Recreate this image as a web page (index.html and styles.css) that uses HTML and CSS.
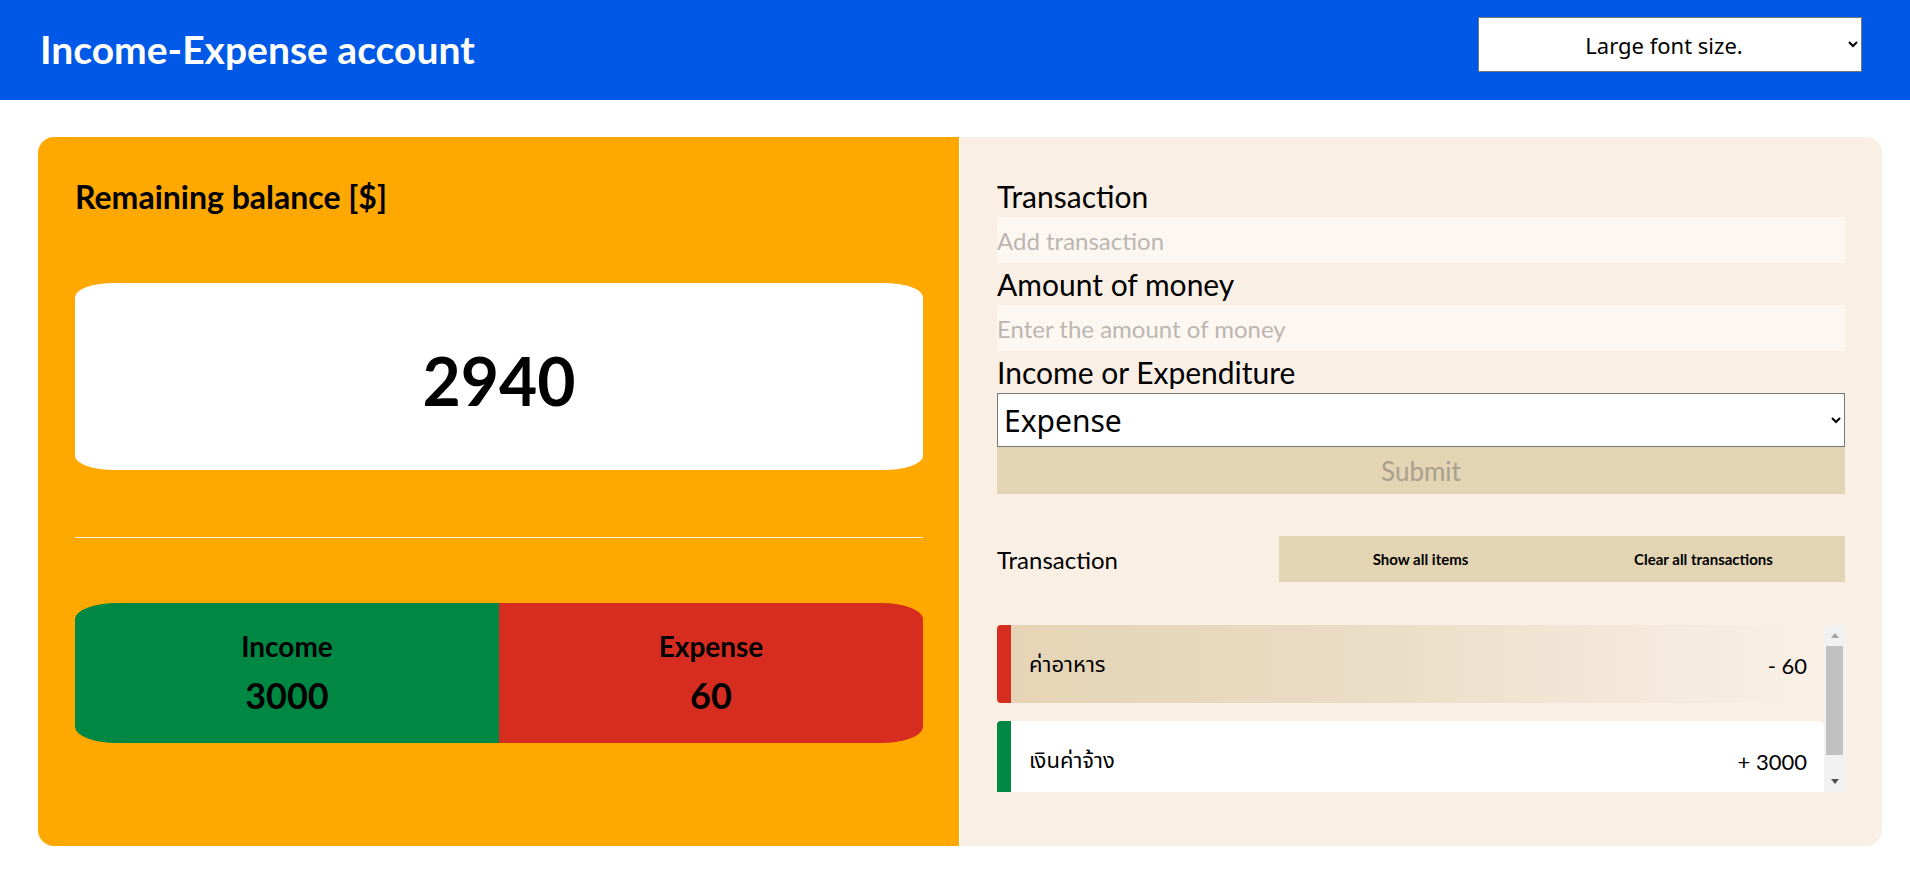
FILE: index.html
```html
<!DOCTYPE html>
<html lang="en">
<head>
<meta charset="utf-8">
<title>Income-Expense account</title>
<link rel="stylesheet" href="styles.css">
</head>
<body>
<header class="topbar">
  <h1 class="app-title">Income-Expense account</h1>
  <select class="size-select">
    <option>Large font size.</option>
    <option>Normal font size.</option>
  </select>
</header>
<main class="layout">
  <section class="summary">
    <h2 class="summary-title">Remaining balance [$]</h2>
    <div class="balance-box">2940</div>
    <hr class="divider">
    <div class="totals">
      <div class="total income">
        <span class="total-label">Income</span>
        <span class="total-value">3000</span>
      </div>
      <div class="total expense">
        <span class="total-label">Expense</span>
        <span class="total-value">60</span>
      </div>
    </div>
  </section>
  <section class="entry">
    <form class="entry-form">
      <label class="field-label">Transaction</label>
      <input class="field-input" type="text" placeholder="Add transaction">
      <label class="field-label">Amount of money</label>
      <input class="field-input" type="text" placeholder="Enter the amount of money">
      <label class="field-label">Income or Expenditure</label>
      <select class="type-select">
        <option>Expense</option>
        <option>Income</option>
      </select>
      <button class="submit-btn" type="button">Submit</button>
    </form>
    <div class="list-head">
      <span class="list-title">Transaction</span>
      <div class="list-actions">
        <button class="action-btn" type="button">Show all items</button>
        <button class="action-btn" type="button">Clear all transactions</button>
      </div>
    </div>
    <div class="tx-wrap">
      <ul class="tx-list">
        <li class="tx minus"><span class="tx-name">ค่าอาหาร</span><span class="tx-amount">- 60</span></li>
        <li class="tx plus"><span class="tx-name">เงินค่าจ้าง</span><span class="tx-amount">+ 3000</span></li>
      </ul>
      <div class="scrollbar" aria-hidden="true">
        <span class="sb-arrow up"></span>
        <span class="sb-track"><span class="sb-thumb"></span></span>
        <span class="sb-arrow down"></span>
      </div>
    </div>
  </section>
</main>
</body>
</html>
```
FILE: styles.css
```css
* { box-sizing: border-box; }

body {
  margin: 0;
  font-family: "Lato", "Noto Sans Thai", "Noto Sans", sans-serif;
  color: #000;
  background: #fff;
}

.topbar {
  height: 100px;
  background: #0059e6;
  display: flex;
  align-items: center;
  justify-content: space-between;
  padding: 0 48px 0 40px;
}

.app-title {
  margin: 0;
  color: #fff;
  font-size: 39px;
  font-weight: 700;
  line-height: 1;
  position: relative;
  top: -1px;
}

.size-select {
  width: 384px;
  height: 55px;
  margin-top: -11px;
  font-family: "Noto Sans", sans-serif;
  font-size: 22px;
  text-align: center;
  text-align-last: center;
  background: #fff;
  border: 1px solid #767676;
  border-radius: 0;
  color: #000;
}

.layout {
  display: grid;
  grid-template-columns: 921px 922px;
  column-gap: 1px;
  padding: 37px 28px 0 38px;
}

.summary {
  background: #ffa800;
  border-radius: 16px 0 0 16px;
  height: 709px;
  padding: 41px 36px 0 37px;
}

.summary-title {
  margin: 0;
  font-size: 32px;
  line-height: 38px;
  font-weight: 700;
}

.balance-box {
  margin-top: 67px;
  height: 187px;
  background: #fff;
  border-radius: 40px / 14px;
  display: flex;
  align-items: center;
  justify-content: center;
  font-size: 66px;
  font-weight: 700;
  padding-top: 8px;
}

.divider {
  margin: 67px 0 0;
  border: 0;
  height: 1px;
  background: #fff3dc;
}

.totals {
  margin-top: 65px;
  height: 140px;
  display: grid;
  grid-template-columns: 1fr 1fr;
  border-radius: 42px / 16px;
  overflow: hidden;
}

.total {
  display: flex;
  flex-direction: column;
  align-items: center;
  justify-content: center;
  gap: 14px;
  padding-bottom: 2px;
}

.total.income { background: #008744; }
.total.expense { background: #d62d20; }

.total-label {
  font-size: 28px;
  font-weight: 700;
  line-height: 32px;
}

.total-value {
  font-size: 36px;
  font-weight: 700;
  line-height: 38px;
}

.entry {
  background: #faefe5;
  border-radius: 0 16px 16px 0;
  height: 709px;
  padding: 38px 37px 0 37px;
}

.entry-form {
  display: flex;
  flex-direction: column;
}

.field-label {
  font-size: 30px;
  line-height: 42px;
  height: 42px;
}

.field-input {
  height: 46px;
  border: 0;
  background: #fdf7f2;
  padding: 0;
  font-family: inherit;
  font-size: 24px;
  outline: none;
}

.field-input::placeholder { color: #bbb6b1; }

.type-select {
  height: 54px;
  font-family: "Noto Sans", sans-serif;
  font-size: 30px;
  background: #fff;
  border: 1px solid #767676;
  border-radius: 0;
  padding-left: 2px;
  color: #000;
}

.submit-btn {
  height: 47px;
  border: 0;
  background: #e3d4b4;
  color: #a99f8e;
  font-family: inherit;
  font-size: 26px;
}

.list-head {
  margin-top: 42px;
  display: grid;
  grid-template-columns: 282px 1fr;
  align-items: center;
}

.list-title {
  font-size: 24px;
}

.list-actions {
  display: grid;
  grid-template-columns: 1fr 1fr;
  height: 46px;
  background: #e3d4b4;
}

.action-btn {
  border: 0;
  background: transparent;
  font-family: inherit;
  font-size: 15px;
  font-weight: 700;
  color: #000;
}

.tx-wrap {
  margin-top: 43px;
  height: 167px;
  display: grid;
  grid-template-columns: 1fr 21px;
}

.tx-list {
  list-style: none;
  margin: 0;
  padding: 0;
  overflow: hidden;
}

.tx {
  height: 78px;
  margin-bottom: 18px;
  display: flex;
  align-items: center;
  justify-content: space-between;
  padding: 2px 17px 0 18px;
  border-left: 14px solid;
  border-radius: 4px 6px 6px 4px;
  font-size: 22px;
}

.tx.minus {
  border-left-color: #d62d20;
  background: linear-gradient(90deg, #e5d4b5 0%, #e9dcc3 40%, #f6ebe0 85%, #faf0e6 100%);
}

.tx.plus {
  border-left-color: #008744;
  background: #fff;
}

.scrollbar {
  display: flex;
  flex-direction: column;
  background: #f1f1f1;
}

.sb-arrow {
  height: 21px;
  display: flex;
  align-items: center;
  justify-content: center;
}

.sb-arrow::before {
  content: "";
  width: 0;
  height: 0;
  border-left: 4px solid transparent;
  border-right: 4px solid transparent;
}

.sb-arrow.up::before { border-bottom: 5px solid #a3a3a3; }
.sb-arrow.down::before { border-top: 5px solid #505050; }

.sb-track {
  flex: 1;
  display: flex;
  padding: 0 2px;
}

.sb-thumb {
  flex: 1;
  height: 109px;
  background: #c1c1c1;
}
```
